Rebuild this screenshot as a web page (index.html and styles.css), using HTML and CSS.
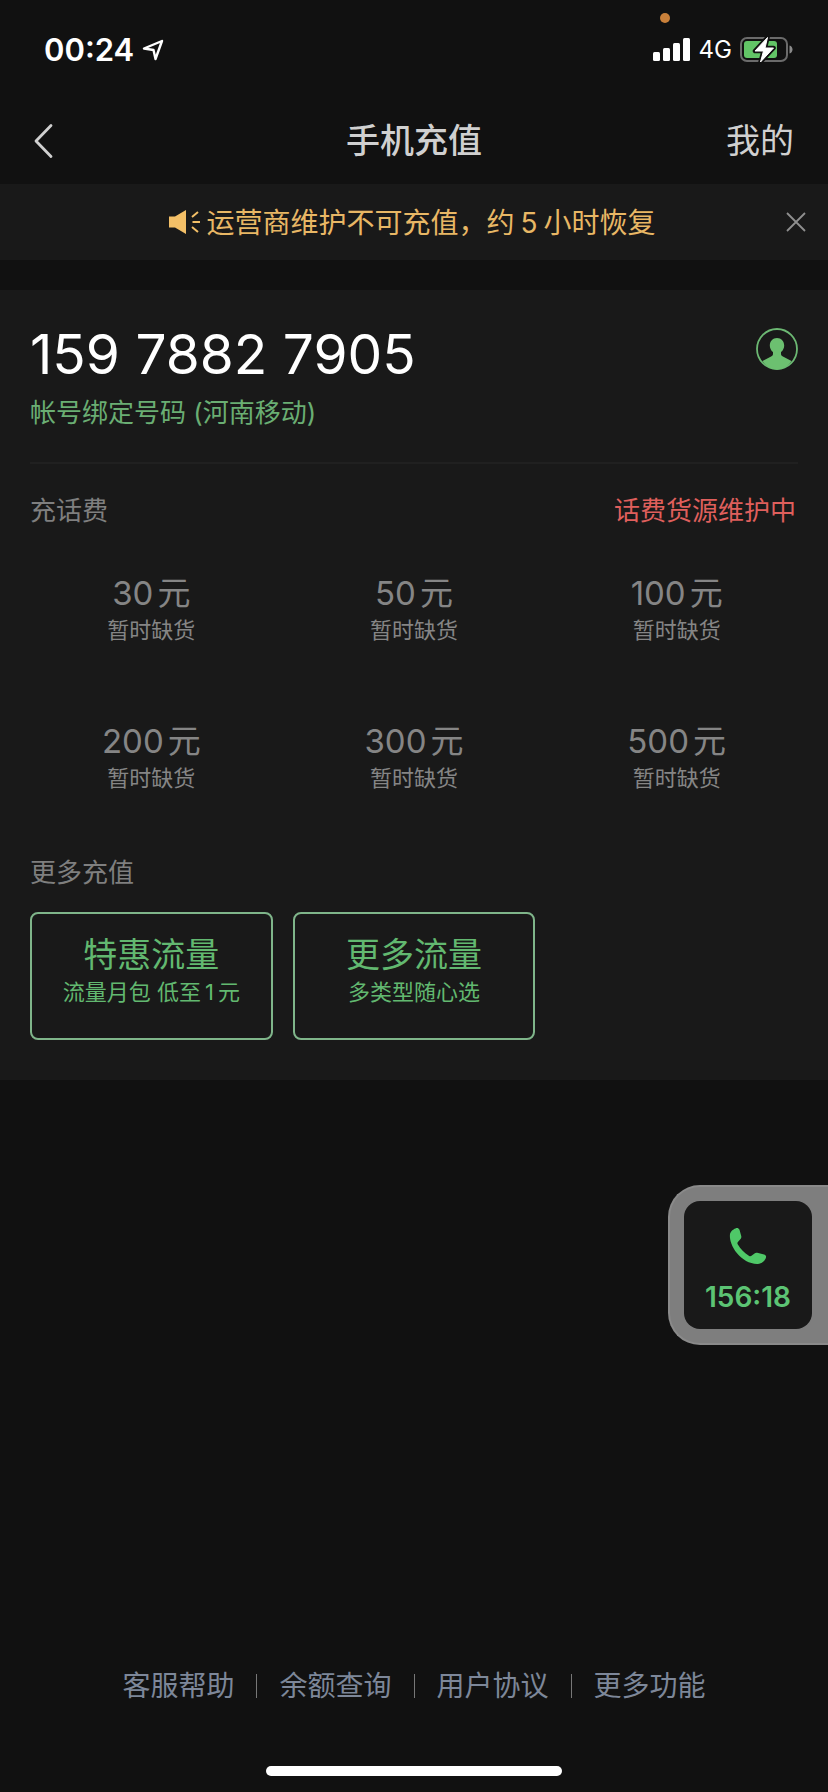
FILE: index.html
```
<!DOCTYPE html>
<html lang="zh-CN">
<head>
<meta charset="utf-8">
<meta name="viewport" content="width=device-width, initial-scale=1">
<title>手机充值</title>
<link rel="stylesheet" href="styles.css">
</head>
<body>
<div class="page">
  <div class="status-bar">
    <div class="status-left">
      <span class="clock">00:24</span>
      <svg class="icon-location" viewBox="0 0 22 22" aria-hidden="true"><path d="M20 2 2 9.500 11.500 11 13.500 20Z" fill="none" stroke="#fff" stroke-width="2.400" stroke-linejoin="round"/></svg>
    </div>
    <div class="status-right">
      <svg class="icon-signal" viewBox="0 0 38 24" aria-hidden="true"><g fill="#fff"><rect x="0" y="14" width="7" height="9" rx="1.500"/><rect x="10" y="10" width="7" height="13" rx="1.500"/><rect x="20" y="5" width="7" height="18" rx="1.500"/><rect x="30" y="0" width="7" height="23" rx="1.500"/></g></svg>
      <span class="network">4G</span>
      <svg class="icon-battery" viewBox="0 0 54 28" aria-hidden="true"><rect x="1" y="2" width="46" height="23" rx="6" fill="none" stroke="#6b6b6b" stroke-width="2"/><path d="M49.500 9.500c2 .5 3 2.200 3 4s-1 3.500-3 4z" fill="#8a8a8a"/><rect x="4" y="5" width="33" height="17" rx="3" fill="#62c466"/><path d="M27.500 1.500 15 15h8.500L20.500 26 33.500 12H25Z" fill="#fff" stroke="#111" stroke-width="4.500" stroke-linejoin="round"/><path d="M27.500 1.500 15 15h8.500L20.500 26 33.500 12H25Z" fill="#fff" stroke="#fff" stroke-width="1" stroke-linejoin="round"/></svg>
    </div>
    <span class="mic-dot"></span>
  </div>

  <header class="nav">
    <button class="back" type="button" aria-label="返回"><svg viewBox="0 0 20 36" aria-hidden="true"><path d="M17 2.500 2 18 17 33.500" fill="none" stroke="#d0d0d0" stroke-width="2.800" stroke-linecap="round" stroke-linejoin="round"/></svg></button>
    <h1 class="nav-title">手机充值</h1>
    <a class="nav-link" href="#mine">我的</a>
  </header>

  <div class="notice">
    <svg class="icon-horn" viewBox="0 0 32 26" aria-hidden="true"><path d="M1 7.500h6L18 1v24L7 18.500H1Z" fill="#f3bf67"/><path d="M24 8 30 3M24.500 13H32M24 18 30 23" fill="none" stroke="#f3bf67" stroke-width="2"/></svg>
    <p class="notice-text">运营商维护不可充值，约<span class="num">5</span>小时恢复</p>
    <button class="notice-close" type="button" aria-label="关闭"><svg viewBox="0 0 20 20" aria-hidden="true"><path d="M1 1 19 19M19 1 1 19" stroke="#8f8f8f" stroke-width="1.800" fill="none"/></svg></button>
  </div>

  <main class="panel">
    <section class="account">
      <div>
        <p class="phone">159 7882 7905</p>
        <p class="carrier">帐号绑定号码 (河南移动)</p>
      </div>
      <button class="contacts" type="button" aria-label="通讯录"><svg viewBox="0 0 42 42" aria-hidden="true"><circle cx="21" cy="21" r="20" fill="none" stroke="#6cb873" stroke-width="1.800"/><path d="M21 10c4.300 0 7.200 3.200 7.200 7.500 0 2.900-1.400 5.200-3.200 6.600v2c0 1.200.7 1.900 1.900 2.400l8.600 4.600C32 38.500 27 41.500 21 41.500S10 38.500 6.500 33.100l8.600-4.600c1.200-.5 1.900-1.200 1.900-2.400v-2c-1.800-1.400-3.200-3.700-3.200-6.600C13.800 13.200 16.700 10 21 10Z" fill="#6cc070"/></svg></button>
    </section>

    <section class="recharge">
      <div class="section-head">
        <h2 class="section-title">充话费</h2>
        <span class="warning">话费货源维护中</span>
      </div>
      <div class="grid">
        <button class="option sold-out" type="button" disabled><span class="option-title">30<span class="unit">元</span></span><span class="option-note">暂时缺货</span></button>
        <button class="option sold-out" type="button" disabled><span class="option-title">50<span class="unit">元</span></span><span class="option-note">暂时缺货</span></button>
        <button class="option sold-out" type="button" disabled><span class="option-title">100<span class="unit">元</span></span><span class="option-note">暂时缺货</span></button>
        <button class="option sold-out" type="button" disabled><span class="option-title">200<span class="unit">元</span></span><span class="option-note">暂时缺货</span></button>
        <button class="option sold-out" type="button" disabled><span class="option-title">300<span class="unit">元</span></span><span class="option-note">暂时缺货</span></button>
        <button class="option sold-out" type="button" disabled><span class="option-title">500<span class="unit">元</span></span><span class="option-note">暂时缺货</span></button>
      </div>
    </section>

    <section class="more">
      <h2 class="section-title">更多充值</h2>
      <div class="grid">
        <button class="option" type="button"><span class="option-title">特惠流量</span><span class="option-note">流量月包 低至<span class="num">1</span>元</span></button>
        <button class="option" type="button"><span class="option-title">更多流量</span><span class="option-note">多类型随心选</span></button>
      </div>
    </section>
  </main>

  <footer class="footer">
    <nav class="links">
      <a href="#help">客服帮助</a>
      <a href="#balance">余额查询</a>
      <a href="#terms">用户协议</a>
      <a href="#more">更多功能</a>
    </nav>
    <div class="home-indicator"></div>
  </footer>
</div>

<button class="call" type="button" aria-label="通话中 156:18">
  <span class="call-card">
    <svg class="icon-call" viewBox="0 0 38 38" aria-hidden="true"><path d="M6.500 1.400C8.200.7 9.700 1.300 10.500 2.800l1.800 6.400c.2 1-.1 2-.8 2.800l-2.600 3c-.6.700-.6 1.500-.2 2.300 2.900 5 6.500 8.700 11.500 11.600.8.400 1.600.4 2.300-.1l3-2.400c.8-.6 1.700-.8 2.700-.6l6.900 1.700c1.600.5 2.300 1.600 1.900 3-.9 3.200-4.200 6.200-8.200 6.400C21 37.200 13.300 32.800 8 26.300 3 20.200.6 13.300.9 8 1.100 4.500 4 2.200 6.500 1.400Z" fill="#4fc868"/></svg>
    <span class="call-time">156:18</span>
  </span>
</button>
</body>
</html>
```
FILE: styles.css
```
* {
  box-sizing: border-box;
}

body {
  margin: 0;
  background: #111;
  color: #d0d0d0;
  font-family: Inter, "Noto Sans CJK SC", sans-serif;
}

h1, h2, p {
  margin: 0;
  font-weight: 400;
}

button {
  margin: 0;
  padding: 0;
  border: 0;
  background: none;
  color: inherit;
  font: inherit;
}

a {
  color: inherit;
  text-decoration: none;
}

svg {
  display: block;
}

.page {
  display: flex;
  flex-direction: column;
  min-height: 100vh;
}

/* Status bar */
.status-bar {
  position: relative;
  display: flex;
  justify-content: space-between;
  height: 96px;
  padding: 30px 34px 26px 44px;
  color: #fff;
}

.status-left,
.status-right {
  display: flex;
  align-items: center;
  gap: 8px;
}

.clock {
  font-size: 31px;
  line-height: 40px;
  font-weight: 600;
}

.network {
  font-size: 24px;
  line-height: 40px;
}

.icon-location {
  width: 22px;
  height: 22px;
}

.icon-signal {
  width: 38px;
  height: 24px;
}

.icon-battery {
  width: 54px;
  height: 28px;
}

.mic-dot {
  position: absolute;
  top: 13px;
  right: 158px;
  width: 10px;
  height: 10px;
  border-radius: 50%;
  background: #c9803a;
}

/* Navigation */
.nav {
  display: grid;
  grid-template-columns: 1fr auto 1fr;
  align-items: center;
  height: 88px;
  padding: 2px 34px 0;
  font-size: 34px;
  line-height: 44px;
}

.back {
  justify-self: start;
}

.back svg {
  width: 20px;
  height: 36px;
}

.nav-title {
  font-size: 34px;
  font-weight: 500;
}

.nav-link {
  justify-self: end;
}

/* Notice */
.notice {
  position: relative;
  display: flex;
  align-items: center;
  justify-content: center;
  gap: 6px;
  height: 76px;
  padding-right: 4px;
  background: #191919;
  color: #e8b765;
  font-size: 28px;
  line-height: 40px;
}

.notice-text {
  padding-top: 2px;
}

.num {
  margin: 0 4px;
}

.notice .num {
  margin: 0 6px;
}

.icon-horn {
  width: 32px;
  height: 26px;
}

.notice-close {
  position: absolute;
  top: 28px;
  right: 22px;
}

.notice-close svg {
  width: 20px;
  height: 20px;
}

/* Panel */
.panel {
  margin-top: 30px;
  padding: 28px 30px 40px;
  background: #191919;
}

.account {
  display: flex;
  align-items: flex-start;
  justify-content: space-between;
  padding-bottom: 30px;
  border-bottom: 2px solid #202020;
}

.phone {
  color: #fff;
  font-size: 55px;
  line-height: 72px;
}

.carrier {
  margin-top: 4px;
  color: #6aae73;
  font-size: 26px;
  line-height: 38px;
}

.contacts {
  margin-top: 10px;
}

.contacts svg {
  width: 42px;
  height: 42px;
}

.section-head {
  display: flex;
  justify-content: space-between;
  padding-right: 2px;
}

.section-title,
.warning {
  font-size: 26px;
  line-height: 38px;
}

.section-title {
  color: #7f7f7f;
}

.warning {
  color: #df5f5c;
}

.recharge,
.more {
  padding-top: 28px;
}

.grid {
  display: grid;
  grid-template-columns: repeat(3, 1fr);
  gap: 20px;
  margin-top: 20px;
}

.option {
  display: flex;
  flex-direction: column;
  align-items: center;
  min-height: 128px;
  padding-top: 20px;
  border: 2px solid #7fb58a;
  border-radius: 8px;
  color: #62b870;
}

.option.sold-out {
  border-color: transparent;
  color: #858585;
}

.option-title {
  font-size: 34px;
  line-height: 42px;
}

.sold-out .option-title {
  font-size: 33px;
}

.option-note {
  font-size: 22px;
  line-height: 32px;
}

.unit {
  margin-left: 4px;
}

/* Footer */
.footer {
  display: flex;
  flex-direction: column;
  align-items: center;
  gap: 60px;
  margin-top: auto;
  padding-bottom: 16px;
}

.links {
  display: flex;
  align-items: center;
  color: #7d8799;
  font-size: 28px;
  line-height: 40px;
}

.links a {
  display: flex;
  align-items: center;
}

.links a + a::before {
  width: 1px;
  height: 24px;
  margin: 0 22px;
  background: #777;
  content: "";
}

.home-indicator {
  width: 296px;
  height: 10px;
  border-radius: 5px;
  background: #fff;
}

/* Floating call window */
.call {
  position: fixed;
  top: 1185px;
  right: 0;
  padding: 14px 16px 14px 14px;
  border: 2px solid #8a8a8a;
  border-right: 0;
  border-radius: 32px 0 0 32px;
  background: #7e7e7e;
}

.call-card {
  display: flex;
  flex-direction: column;
  align-items: center;
  gap: 14px;
  width: 128px;
  height: 128px;
  padding-top: 26px;
  border-radius: 16px;
  background: #191919;
  color: #5cc474;
}

.icon-call {
  width: 38px;
  height: 38px;
}

.call-time {
  font-size: 28px;
  line-height: 36px;
  font-weight: 600;
}
```
